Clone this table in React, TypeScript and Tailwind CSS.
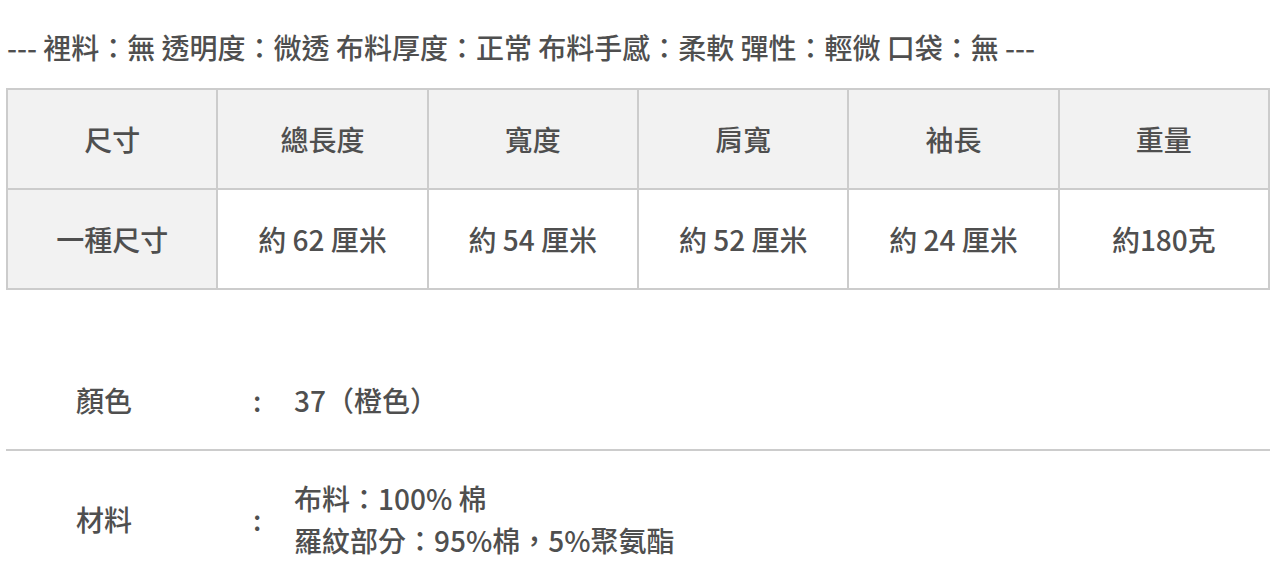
const headers = ['尺寸', '總長度', '寬度', '肩寬', '袖長', '重量'];
const values = ['一種尺寸', '約 62 厘米', '約 54 厘米', '約 52 厘米', '約 24 厘米', '約180克'];

export default function App() {
  return (
    <div className="h-[574px] w-[1276px] overflow-hidden bg-white px-[6px] text-[#4f4f4f] font-['Noto_Sans_CJK_TC',sans-serif]">
      <p className="pl-px pt-[30px] text-[28px] leading-[34px] font-medium">
        --- 裡料：無 透明度：微透 布料厚度：正常 布料手感：柔軟 彈性：輕微 口袋：無 ---
      </p>

      <table className="mt-[24px] w-full table-fixed border-collapse text-[28px] font-medium">
        <tbody>
          <tr>
            {headers.map((h) => (
              <td key={h} className="h-[100px] border-2 border-[#cccccc] bg-[#f2f2f2] text-center">
                {h}
              </td>
            ))}
          </tr>
          <tr>
            {values.map((v, i) => (
              <td
                key={v}
                className={`h-[100px] border-2 border-[#cccccc] text-center ${i === 0 ? 'bg-[#f2f2f2]' : 'bg-white'}`}
              >
                {v}
              </td>
            ))}
          </tr>
        </tbody>
      </table>

      <div className="mt-[63px] text-[28px] font-medium">
        <div className="flex h-[98px] items-center border-b-2 border-[#cccccc] pb-[2px]">
          <span className="w-[247px] pl-[70px]">顏色</span>
          <span className="w-[41px]">:</span>
          <span>37（橙色）</span>
        </div>
        <div className="flex items-center pt-[26px]">
          <span className="w-[247px] pl-[70px]">材料</span>
          <span className="w-[41px]">:</span>
          <div className="leading-[42px]">
            <div>布料：100% 棉</div>
            <div>羅紋部分：95%棉，5%聚氨酯</div>
          </div>
        </div>
      </div>
    </div>
  );
}
